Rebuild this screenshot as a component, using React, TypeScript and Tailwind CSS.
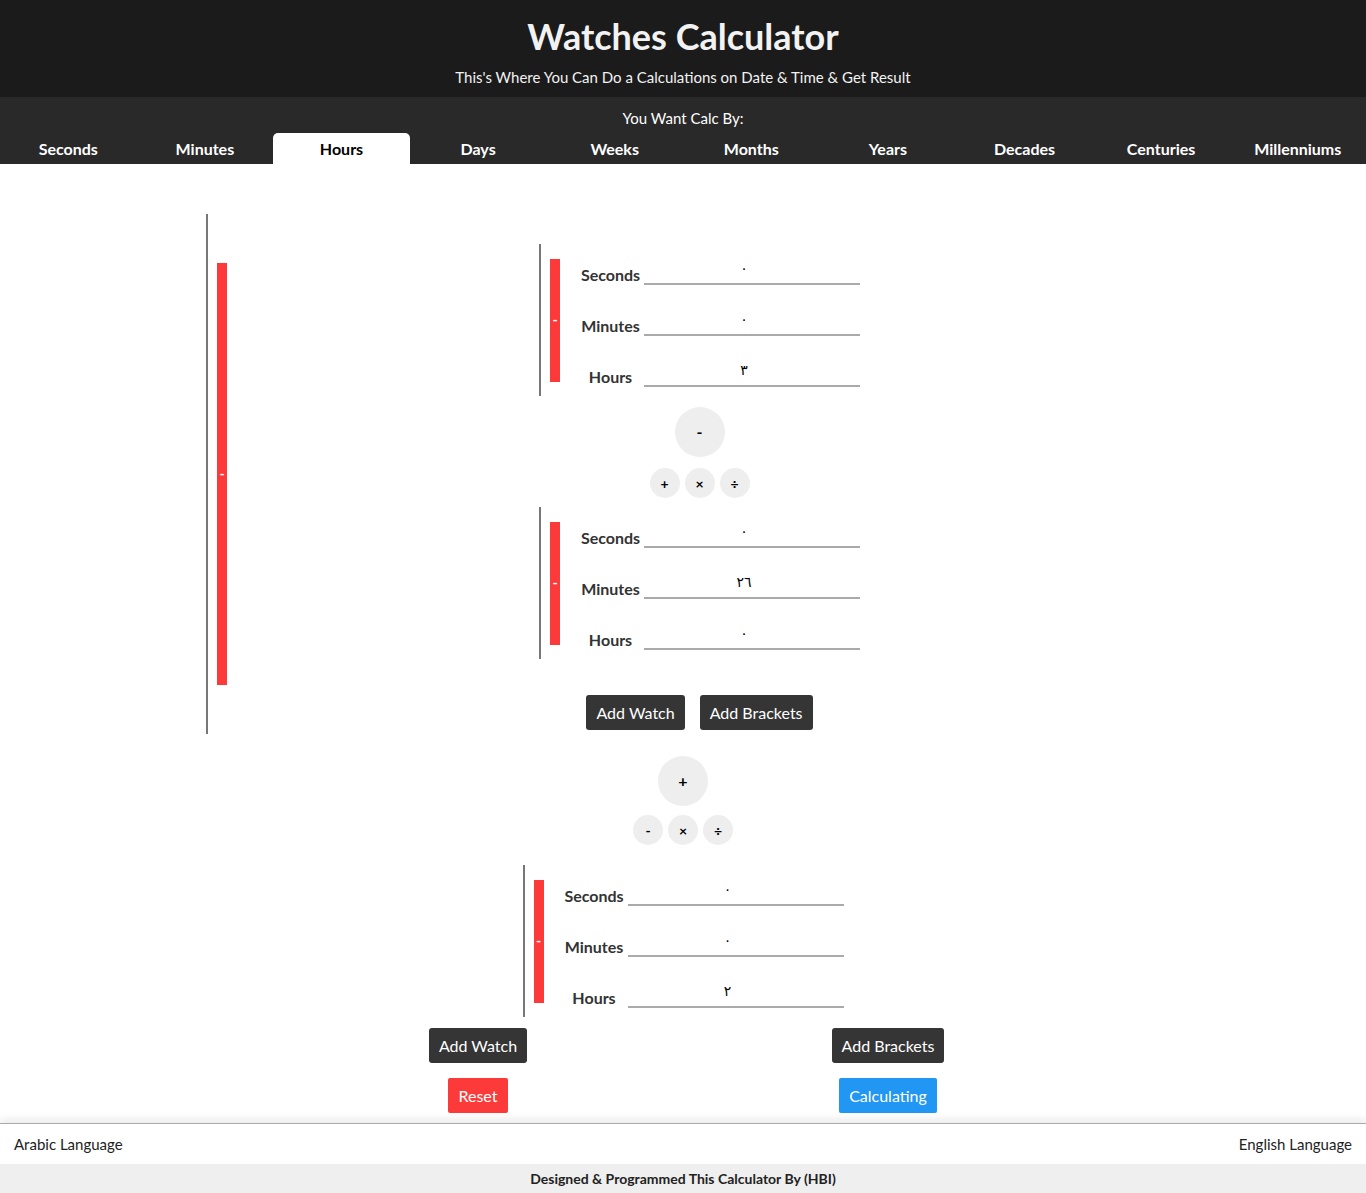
import React from 'react';

const tabs = ['Seconds', 'Minutes', 'Hours', 'Days', 'Weeks', 'Months', 'Years', 'Decades', 'Centuries', 'Millenniums'];

type Row = { label: string; value: string };

const Watch = ({ rows }: { rows: Row[] }) => {
  return (
    <div className="flex h-[152px] w-[321px] border-l-2 border-[#777]">
      <div className="ml-[9px] flex h-[123px] w-[10px] self-center items-center justify-center bg-[#fc3a3a] text-[14px] font-bold leading-none text-white">
        -
      </div>
      <div className="ml-[17px] flex flex-col gap-[17px] pt-[14px]">
        {rows.map((row) => (
          <div key={row.label} className="flex h-[34px] items-start">
            <div className="w-[67px] text-center text-[16px] font-bold leading-[34px] text-[#333]">{row.label}</div>
            <div className="h-[27px] w-[216px] border-b-2 border-[#aaa] pr-[16px] text-center font-['DejaVu_Sans',sans-serif] text-[14px] leading-[20px] text-black">
              {row.value}
            </div>
          </div>
        ))}
      </div>
    </div>
  );
};

const Operators = ({ main, others, gap }: { main: string; others: string[]; gap: string }) => {
  return (
    <div className="flex flex-col items-center">
      <div className="flex h-[50px] w-[50px] items-center justify-center rounded-full bg-[#eee] text-[16px] font-bold text-black">
        {main}
      </div>
      <div className={`${gap} flex gap-[5px]`}>
        {others.map((op) => (
          <div key={op} className="flex h-[30px] w-[30px] items-center justify-center rounded-full bg-[#eee] text-[14px] font-bold text-black">
            {op}
          </div>
        ))}
      </div>
    </div>
  );
};

const DarkButton = ({ children }: { children: React.ReactNode }) => (
  <button className="h-[35px] rounded-[3px] bg-[#353535] px-[10px] text-[16px] text-white">{children}</button>
);

export default function App() {
  return (
    <div className="flex min-h-screen flex-col bg-white font-['Lato',sans-serif]">
      <header className="h-[97px] bg-[#1b1b1b] pt-[14px] text-center text-[#f2f2f2]">
        <h1 className="text-[36px] font-bold leading-[44px]">Watches Calculator</h1>
        <p className="mt-[9px] text-[15px] leading-[20px]">This's Where You Can Do a Calculations on Date &amp; Time &amp; Get Result</p>
      </header>

      <nav className="bg-[#292929] pt-[11px] text-white">
        <p className="text-center text-[15px] leading-[20px]">You Want Calc By:</p>
        <div className="mt-[5px] grid grid-cols-10">
          {tabs.map((tab) => (
            <div
              key={tab}
              className={
                tab === 'Hours'
                  ? 'h-[31px] rounded-t-[5px] bg-white text-center text-[16px] font-bold leading-[31px] text-black'
                  : 'h-[31px] text-center text-[16px] font-bold leading-[31px] text-white'
              }
            >
              {tab}
            </div>
          ))}
        </div>
      </nav>

      <main className="flex flex-1 flex-col items-center pt-[50px] pb-[10px]">
        <div className="mx-auto flex h-[520px] w-[954px] border-l-2 border-[#777]">
          <div className="ml-[9px] flex h-[422px] w-[10px] self-center items-center justify-center bg-[#fc3a3a] text-[14px] font-bold leading-none text-white">
            -
          </div>
          <div className="ml-[12px] flex flex-1 flex-col items-center pt-[30px]">
            <Watch
              rows={[
                { label: 'Seconds', value: '٠' },
                { label: 'Minutes', value: '٠' },
                { label: 'Hours', value: '٣' },
              ]}
            />
            <div className="mt-[11px]">
              <Operators main="-" others={['+', '×', '÷']} gap="mt-[11px]" />
            </div>
            <div className="mt-[9px]">
              <Watch
                rows={[
                  { label: 'Seconds', value: '٠' },
                  { label: 'Minutes', value: '٢٦' },
                  { label: 'Hours', value: '٠' },
                ]}
              />
            </div>
            <div className="mt-[36px] flex gap-[15px]">
              <DarkButton>Add Watch</DarkButton>
              <DarkButton>Add Brackets</DarkButton>
            </div>
          </div>
        </div>

        <div className="mt-[22px]">
          <Operators main="+" others={['-', '×', '÷']} gap="mt-[9px]" />
        </div>

        <div className="mt-[20px]">
          <Watch
            rows={[
              { label: 'Seconds', value: '٠' },
              { label: 'Minutes', value: '٠' },
              { label: 'Hours', value: '٢' },
            ]}
          />
        </div>

        <div className="mt-[11px] grid w-[820px] grid-cols-2 gap-y-[15px]">
          <div className="flex justify-center">
            <DarkButton>Add Watch</DarkButton>
          </div>
          <div className="flex justify-center">
            <DarkButton>Add Brackets</DarkButton>
          </div>
          <div className="flex justify-center">
            <button className="h-[35px] rounded-[2px] bg-[#fc3a3a] px-[10px] text-[16px] text-white">Reset</button>
          </div>
          <div className="flex justify-center">
            <button className="h-[35px] rounded-[2px] bg-[#2196f3] px-[10px] text-[16px] text-white">Calculating</button>
          </div>
        </div>
      </main>

      <footer className="border-t border-[#aaa] shadow-[0_-4px_8px_rgba(0,0,0,0.08)]">
        <div className="flex h-[40px] items-center justify-between px-[14px] text-[15px] text-[#222]">
          <span>Arabic Language</span>
          <span>English Language</span>
        </div>
        <div className="h-[29px] bg-[#efefef] text-center text-[14px] font-bold leading-[29px] text-[#222]">
          Designed &amp; Programmed This Calculator By (HBI)
        </div>
      </footer>
    </div>
  );
}
